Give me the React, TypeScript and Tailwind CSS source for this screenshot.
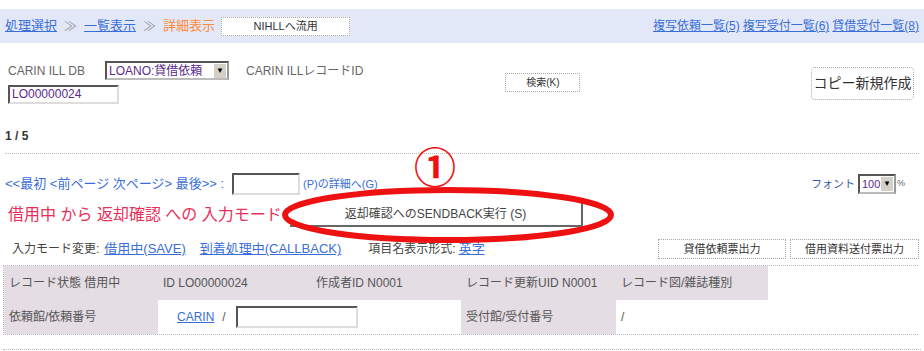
import React from "react";

const font = { fontFamily: '"Liberation Sans", "Noto Sans CJK JP", sans-serif' };

function Btn({ children, className = "" }: { children: React.ReactNode; className?: string }) {
  return (
    <div className={`flex items-center justify-center border border-dotted border-[#aaa] bg-white text-[#333] ${className}`}>
      {children}
    </div>
  );
}

function Sel({ children, className = "" }: { children: React.ReactNode; className?: string }) {
  return (
    <div className={`flex items-center border-2 border-[#555] border-r-[#999] border-b-[#bbb] bg-white ${className}`}>
      <span className="flex-1 overflow-hidden whitespace-nowrap pl-[2px] text-[#5a2a8a]">{children}</span>
      <span className="mr-[1px] flex h-[14px] w-[12px] shrink-0 items-center justify-center bg-[#d4d0c8] text-[8px] text-black">▼</span>
    </div>
  );
}

export default function App() {
  return (
    <div className="relative h-[351px] w-[924px] overflow-hidden bg-white text-[12px] text-[#555]" style={font}>
      {/* breadcrumb bar */}
      <div className="mt-[9px] flex h-[34px] items-center bg-[#e3e8f8] px-[5px] text-[13px]">
        <span className="text-[#3a6ed8] underline">処理選択</span>
        <span className="mx-[7px] text-[#999]">≫</span>
        <span className="text-[#3a6ed8] underline">一覧表示</span>
        <span className="mx-[7px] text-[#999]">≫</span>
        <span className="text-[#ff8a3a]">詳細表示</span>
        <Btn className="ml-[6px] h-[19px] w-[129px] text-[11px]">NIHLLへ流用</Btn>
        <div className="ml-auto flex gap-[3px] text-[12px] text-[#3a6ed8] underline">
          <span>複写依頼一覧(5)</span>
          <span>複写受付一覧(6)</span>
          <span>貸借受付一覧(8)</span>
        </div>
      </div>

      {/* search row */}
      <div className="flex px-[8px] pt-[18px]">
        <div className="flex flex-col">
          <div className="flex items-center">
            <span className="w-[97px] text-[12px] text-[#666]">CARIN ILL DB</span>
            <Sel className="h-[19px] w-[124px] text-[12px]">LOANO:貸借依頼</Sel>
            <span className="ml-[17px] text-[12px] text-[#666]">CARIN ILLレコードID</span>
          </div>
          <div className="mt-[5px] h-[19px] w-[111px] border-2 border-[#555] border-r-[#ddd] border-b-[#ddd] pl-[2px] text-[12px] leading-[15px] text-[#5a2a8a]">
            LO00000024
          </div>
        </div>
        <Btn className="ml-[142px] mt-[12px] h-[19px] w-[75px] text-[10px]">検索(K)</Btn>
        <Btn className="ml-auto mr-[2px] mt-[6px] h-[33px] w-[103px] rounded-[4px] text-[14px] text-[#222]">コピー新規作成</Btn>
      </div>

      <div className="mt-[23px] pl-[5px] text-[12px] font-bold text-[#333]">1 / 5</div>
      <div className="mx-[5px] mt-[8px] border-t border-dotted border-[#bbb]" />

      {/* paging row */}
      <div className="mt-[19px] flex items-center px-[5px]">
        <span className="text-[13px] text-[#3a6ed8]">&lt;&lt;最初 &lt;前ページ 次ページ&gt; 最後&gt;&gt; :</span>
        <div className="ml-[8px] h-[22px] w-[68px] border-2 border-[#555] border-r-[#ddd] border-b-[#ddd]" />
        <span className="ml-[3px] text-[11px] text-[#3a6ed8]">(P)の詳細へ(G)</span>
        <span className="ml-auto text-[11px] text-[#3a5aa8]">フォント</span>
        <Sel className="ml-[3px] h-[20px] w-[38px] text-[11px]">100</Sel>
        <span className="ml-[1px] mr-[14px] text-[9px] text-[#666]">%</span>
      </div>

      {/* mode row */}
      <div className="relative mt-[7px] flex items-center px-[8px]">
        <span className="w-[282px] text-[16px] text-[#e8305a]">借用中 から 返却確認 への 入力モード</span>
        <div className="flex h-[25px] w-[293px] items-center justify-center border-r-2 border-b-2 border-r-[#666] border-b-[#666] bg-white text-[12px] text-[#444]">
          返却確認へのSENDBACK実行 (S)
        </div>
        <svg className="absolute left-[280px] top-[-16px]" width="336" height="58" viewBox="0 0 336 58">
          <ellipse cx="168" cy="29" rx="163" ry="25" fill="none" stroke="#ee1111" strokeWidth="6" />
        </svg>
        <span className="absolute left-[414px] top-[-54px] text-[42px] font-bold leading-[42px] text-[#ee1111]">①</span>
      </div>

      {/* mode change row */}
      <div className="mt-[12px] flex items-center px-[12px] text-[12px]">
        <span className="text-[#444]">入力モード変更:</span>
        <span className="ml-[5px] text-[13px] text-[#3a6ed8] underline">借用中(SAVE)</span>
        <span className="ml-[14px] text-[13px] text-[#3a6ed8] underline">到着処理中(CALLBACK)</span>
        <span className="ml-[27px] text-[#444]">項目名表示形式:</span>
        <span className="ml-[3px] text-[13px] text-[#3a6ed8] underline">英字</span>
        <Btn className="ml-auto h-[20px] w-[128px] text-[11px]">貸借依頼票出力</Btn>
        <Btn className="ml-[4px] mr-[-7px] h-[20px] w-[129px] text-[11px]">借用資料送付票出力</Btn>
      </div>

      {/* record table */}
      <div className="mx-[3px] mt-[6px] grid w-[915px] grid-cols-[154px_153px_150px_155px_152px_151px] border border-dotted border-[#bbb] text-[12px] text-[#555]">
        <div className="flex h-[34px] items-center bg-[#e4dde4] pl-[5px]">レコード状態 借用中</div>
        <div className="flex items-center bg-[#e4dde4] pl-[5px]">ID LO00000024</div>
        <div className="flex items-center bg-[#e4dde4] pl-[5px]">作成者ID N0001</div>
        <div className="flex items-center bg-[#e4dde4] pl-[5px]">レコード更新UID N0001</div>
        <div className="flex items-center bg-[#e4dde4] pl-[5px]">レコード図/雑誌種別</div>
        <div className="bg-white" />
        <div className="flex h-[34px] items-center bg-[#e4dde4] pl-[5px]">依頼館/依頼番号</div>
        <div className="col-span-2 flex items-center bg-white pl-[19px]">
          <span className="text-[#3a6ed8] underline">CARIN</span>
          <span className="ml-[8px]">/</span>
          <div className="ml-[10px] h-[22px] w-[122px] border-2 border-[#555] border-r-[#ddd] border-b-[#ddd]" />
        </div>
        <div className="flex items-center bg-[#e4dde4] pl-[5px]">受付館/受付番号</div>
        <div className="col-span-2 flex items-center bg-white pl-[5px]">/</div>
      </div>
      <div className="mx-[3px] mt-[14px] border-t border-dotted border-[#bbb]" />
    </div>
  );
}
